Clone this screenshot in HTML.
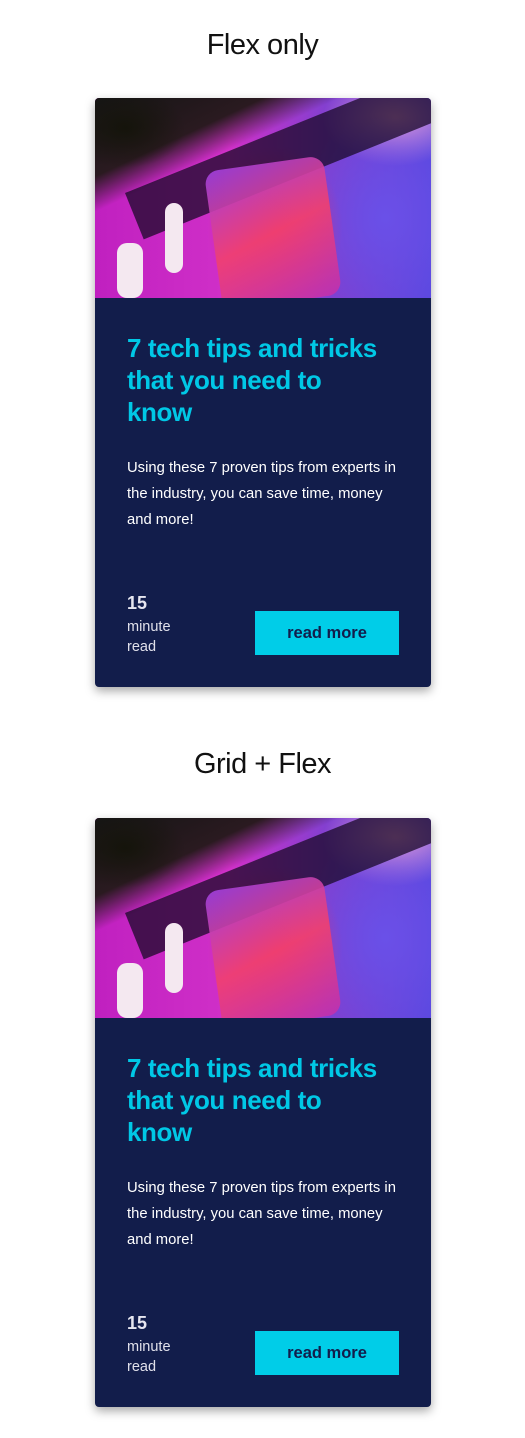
<!DOCTYPE html>
<html><head><meta charset="utf-8"><style>
*{margin:0;padding:0;box-sizing:border-box}
body{width:525px;height:1438px;background:#fff;font-family:"Liberation Sans",sans-serif;position:relative;overflow:hidden}
h1{position:absolute;left:0;width:525px;text-align:center;font-weight:normal;font-size:29px;color:#111;letter-spacing:-0.5px}
.card{position:absolute;left:95px;width:336px;height:589px;background:#121d4b;border-radius:4px;overflow:hidden;box-shadow:0 4px 10px rgba(0,0,0,.35)}
.img{position:absolute;left:0;top:0;width:336px;height:200px;overflow:hidden;
background:
radial-gradient(ellipse 60px 40px at 30px 30px,rgba(20,20,10,.95),transparent),
linear-gradient(155deg,#151515 0%,#2a1a20 22%,transparent 32%),
radial-gradient(ellipse 90px 110px at 180px 130px,#e0306a,transparent 75%),
radial-gradient(ellipse 110px 130px at 290px 120px,#6a50e8,transparent 80%),
radial-gradient(ellipse 90px 60px at 300px 20px,#e8a0d8,transparent 80%),
linear-gradient(90deg,#c020c0 0%,#d030c8 40%,#8040d0 70%,#5a48e0 100%)}
.band{position:absolute;left:30px;width:320px;height:50px;background:rgba(25,10,40,.75);transform:rotate(-22deg);transform-origin:0 0;top:95px}
.pod{position:absolute;background:#f4e8f0;border-radius:10px}
.c{position:absolute;left:32px}
.t{top:234px;font-size:26px;line-height:32px;font-weight:bold;color:#00c8e6;letter-spacing:-0.4px;white-space:nowrap}
.p{top:357px;font-size:14.8px;line-height:26px;color:#fff;white-space:nowrap}
.n{top:495px;font-size:18px;font-weight:bold;color:#e6e6f0}
.m{top:519px;font-size:14.5px;line-height:20px;color:#e0e0ea}
.btn{position:absolute;left:160px;top:513px;width:144px;height:44px;background:#00cde8;color:#121d4b;font-weight:bold;font-size:16.5px;text-align:center;line-height:44px}
</style></head><body>
<h1 style="top:29px">Flex only</h1>
<div class="card" style="top:98px">
<div class="img"><div class="band"></div>
<div class="pod" style="left:70px;top:105px;width:18px;height:70px"></div>
<div class="pod" style="left:22px;top:145px;width:26px;height:55px"></div>
<div style="position:absolute;left:118px;top:65px;width:120px;height:140px;border-radius:14px;background:linear-gradient(160deg,#a040e0,#f04070 50%,#c030b0);transform:rotate(-8deg);opacity:.9"></div>
</div>
<div class="c t">7 tech tips and tricks<br>that you need to<br>know</div>
<div class="c p">Using these 7 proven tips from experts in<br>the industry, you can save time, money<br>and more!</div>
<div class="c n">15</div>
<div class="c m">minute<br>read</div>
<div class="btn">read more</div>
</div>
<h1 style="top:748px">Grid + Flex</h1>
<div class="card" style="top:818px">
<div class="img"><div class="band"></div>
<div class="pod" style="left:70px;top:105px;width:18px;height:70px"></div>
<div class="pod" style="left:22px;top:145px;width:26px;height:55px"></div>
<div style="position:absolute;left:118px;top:65px;width:120px;height:140px;border-radius:14px;background:linear-gradient(160deg,#a040e0,#f04070 50%,#c030b0);transform:rotate(-8deg);opacity:.9"></div>
</div>
<div class="c t">7 tech tips and tricks<br>that you need to<br>know</div>
<div class="c p">Using these 7 proven tips from experts in<br>the industry, you can save time, money<br>and more!</div>
<div class="c n">15</div>
<div class="c m">minute<br>read</div>
<div class="btn">read more</div>
</div>
</body></html>
